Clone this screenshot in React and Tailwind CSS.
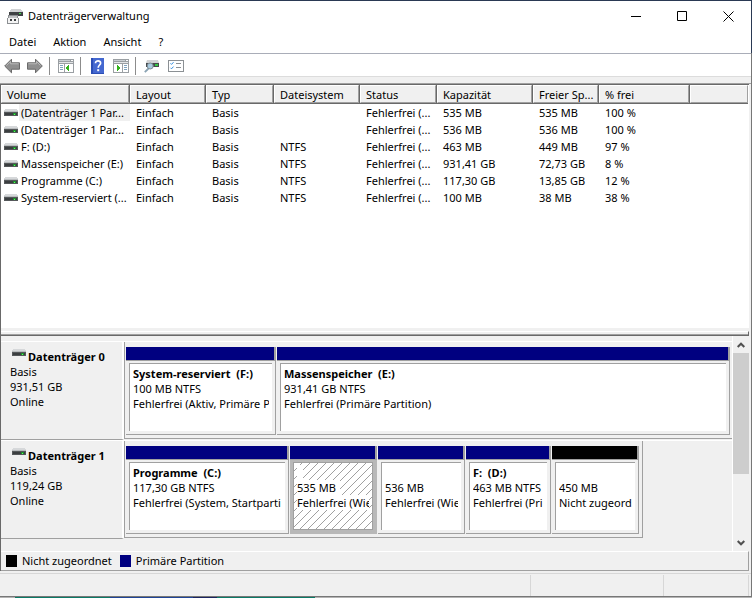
import React from 'react';

const columns = [
    { name: 'Volume', width: 'w-[129px]' },
    { name: 'Layout', width: 'w-[76px]' },
    { name: 'Typ', width: 'w-[68px]' },
    { name: 'Dateisystem', width: 'w-[86px]' },
    { name: 'Status', width: 'w-[77px]' },
    { name: 'Kapazität', width: 'w-[96px]' },
    { name: 'Freier Sp...', width: 'w-[66px]' },
    { name: '% frei', width: 'w-[91px]' },
    { name: '', width: '' },
];

const volumes = [
    ['(Datenträger 1 Par...', 'Einfach', 'Basis', '', 'Fehlerfrei (...', '535 MB', '535 MB', '100 %'],
    ['(Datenträger 1 Par...', 'Einfach', 'Basis', '', 'Fehlerfrei (...', '536 MB', '536 MB', '100 %'],
    ['F: (D:)', 'Einfach', 'Basis', 'NTFS', 'Fehlerfrei (...', '463 MB', '449 MB', '97 %'],
    ['Massenspeicher (E:)', 'Einfach', 'Basis', 'NTFS', 'Fehlerfrei (...', '931,41 GB', '72,73 GB', '8 %'],
    ['Programme (C:)', 'Einfach', 'Basis', 'NTFS', 'Fehlerfrei (...', '117,30 GB', '13,85 GB', '12 %'],
    ['System-reserviert (...', 'Einfach', 'Basis', 'NTFS', 'Fehlerfrei (...', '100 MB', '38 MB', '38 %'],
];

const disks = [
    {
        name: 'Datenträger 0',
        size: '931,51 GB',
        width: 'w-full pr-0.5',
        partitions: [
            { title: 'System-reserviert  (F:)', size: '100 MB NTFS', state: 'Fehlerfrei (Aktiv, Primäre P', grow: 'flex-[150_1_0]' },
            { title: 'Massenspeicher  (E:)', size: '931,41 GB NTFS', state: 'Fehlerfrei (Primäre Partition)', grow: 'flex-[453_1_0]' },
        ],
    },
    {
        name: 'Datenträger 1',
        size: '119,24 GB',
        width: 'w-[519px] max-w-full border-r pr-[3px]',
        partitions: [
            { title: 'Programme  (C:)', size: '117,30 GB NTFS', state: 'Fehlerfrei (System, Startparti', grow: 'flex-[163_1_0]' },
            { title: '', size: '535 MB', state: 'Fehlerfrei (Wie', grow: 'flex-[87_1_0]', selected: true },
            { title: '', size: '536 MB', state: 'Fehlerfrei (Wie', grow: 'flex-[87_1_0]' },
            { title: 'F:  (D:)', size: '463 MB NTFS', state: 'Fehlerfrei (Pri', grow: 'flex-[85_1_0]' },
            { title: '', size: '450 MB', state: 'Nicht zugeord', grow: 'flex-[87_1_0]', free: true },
        ],
    },
];

const DriveIcon = () => (
    <svg width="14" height="8" viewBox="0 0 14 8" className="shrink-0" shapeRendering="crispEdges">
        <path d="M1 0h12v1h1v2H0V1h1z" fill="#d6d8da" />
        <rect y="2" width="14" height="1" fill="#b9bcbe" />
        <rect y="3" width="14" height="4" fill="#55585a" />
        <rect x="1" y="4" width="12" height="2" fill="#3b3e40" />
        <rect x="9" y="4" width="3" height="2" fill="#1d8a2c" />
        <rect x="10" y="5" width="1" height="1" fill="#5dff5d" />
    </svg>
);

const AppIcon = () => (
    <svg width="16" height="15" viewBox="0 0 16 15" shapeRendering="crispEdges">
        <path d="M4 0h10l2 3H3z" fill="#d0d2d4" />
        <rect x="2" y="3" width="14" height="4" fill="#3f4244" />
        <rect x="12" y="4" width="2" height="1" fill="#3ce04a" />
        <path d="M1 6h10v3h1v6H0V9h1z" fill="#8c8f92" />
        <rect x="2" y="7" width="8" height="2" fill="#c2c4c6" />
        <rect x="1" y="9" width="10" height="5" fill="#f4f4f4" />
        <rect x="3" y="10" width="2" height="2" fill="#3f4244" />
        <rect x="7" y="10" width="2" height="2" fill="#3f4244" />
    </svg>
);

const ArrowIcon = ({ forward }) => (
    <svg width="16" height="16" viewBox="0 0 16 16" className={forward ? '-scale-x-100' : ''}>
        <path d="M.7 8 7.5 1.2v3.6h8v6.4h-8v3.6z" fill="#8f8f8f" stroke="#6a6a6a" />
        <path d="M2.4 7.6 6.6 3.4v2.4h8" fill="none" stroke="#b9b9b9" />
    </svg>
);

const PaneIcon = ({ right }) => (
    <svg width="16" height="14" viewBox="0 0 16 14" shapeRendering="crispEdges">
        <rect width="16" height="14" fill="#9a9fa3" />
        <rect x="1" y="1" width="11" height="1" fill="#c9ced2" />
        <rect x="13" y="1" width="2" height="1" fill="#fff" />
        <rect x="1" y="3" width="14" height="1" fill="#e3e5e7" />
        <rect x="1" y="5" width="14" height="8" fill="#fff" />
        {right ? (
            <>
                <rect x="9" y="5" width="1" height="8" fill="#9a9fa3" />
                <path d="M11 6h3v1h-3zM11 8h3v1h-3zM11 10h3v1h-3z" fill="#7fa3bf" />
                <path d="M4 6h1v1h1v1h1v2H6v1H5v1H4z" fill="#34b21c" />
            </>
        ) : (
            <>
                <rect x="6" y="5" width="1" height="8" fill="#9a9fa3" />
                <path d="M2 6h3v1H2zM2 8h3v1H2zM2 10h3v1H2z" fill="#7fa3bf" />
                <path d="M11 6h-1v1H9v1H8v2h1v1h1v1h1z" fill="#34b21c" />
            </>
        )}
    </svg>
);

const HelpIcon = () => (
    <svg width="13" height="16" viewBox="0 0 13 16">
        <rect width="13" height="16" fill="#2a4db5" />
        <rect x="2" width="11" height="15" fill="#4468d0" />
        <path d="M4.500 5.200C4.500 2 9.800 2.200 9.600 5.200 9.500 7 7.200 7.200 7.200 9.800" fill="none" stroke="#fff" strokeWidth="1.7" />
        <rect x="6.2" y="11.2" width="2" height="2" fill="#fff" />
    </svg>
);

const RescanIcon = () => (
    <svg width="16" height="13" viewBox="0 0 16 13">
        <path d="M3 0h11l1 3H2z" fill="#d0d2d4" />
        <rect x="2" y="3" width="13" height="4" fill="#45494b" />
        <rect x="11" y="4" width="3" height="2" fill="#35c845" />
        <path d="M4.500 8.500.8 12.200" stroke="#8aa3b4" strokeWidth="1.8" />
        <circle cx="6.2" cy="6" r="3" fill="#a9cbe0" stroke="#7d8b94" />
    </svg>
);

const SettingsIcon = () => (
    <svg width="16" height="12" viewBox="0 0 16 12">
        <rect x=".5" y=".5" width="15" height="11" fill="#fff" stroke="#8b9094" />
        <path d="m2.500 3.400 1 1 2-2.200M2.500 7.800l1 1 2-2.200" fill="none" stroke="#2e8be0" />
        <path d="M8 3.500h5M8 7.500h5" stroke="#8b9094" shapeRendering="crispEdges" />
    </svg>
);

const ToolSeparator = () => <div className="h-[18px] w-px bg-[#8c8c8c]" />;

const ToolButton = ({ label, children }) => (
    <button aria-label={label} className="flex h-5 w-4 items-center justify-center">{children}</button>
);

const TitleBar = () => (
    <header className="flex h-[30px] items-center pl-[7px]">
        <AppIcon />
        <h1 className="ml-[5px] flex-1">Datenträgerverwaltung</h1>
        <div className="flex h-full">
            <button aria-label="Minimieren" className="flex w-[46px] items-center justify-center">
                <svg width="11" height="11" shapeRendering="crispEdges"><path d="M0 5h10v1H0z" /></svg>
            </button>
            <button aria-label="Maximieren" className="flex w-[46px] items-center justify-center">
                <svg width="11" height="11"><path d="M.5.5h9v9h-9z" fill="none" stroke="#000" /></svg>
            </button>
            <button aria-label="Schließen" className="flex w-[46px] items-center justify-center">
                <svg width="11" height="11"><path d="m.5.5 10 10m0-10-10 10" fill="none" stroke="#000" /></svg>
            </button>
        </div>
    </header>
);

const Toolbar = () => (
    <div className="flex h-[23px] items-center border-b border-[#dcdcdc] pl-1 pt-0.5">
        <div className="flex gap-[7px]">
            <ToolButton label="Zurück"><ArrowIcon /></ToolButton>
            <ToolButton label="Vorwärts"><ArrowIcon forward /></ToolButton>
        </div>
        <div className="flex items-center gap-2 pl-1.5">
            <ToolSeparator />
            <ToolButton label="Konsolenstruktur einblenden"><PaneIcon /></ToolButton>
        </div>
        <div className="flex items-center gap-2 pl-1.5">
            <ToolSeparator />
            <ToolButton label="Hilfe"><HelpIcon /></ToolButton>
            <ToolButton label="Aktionsbereich einblenden"><PaneIcon right /></ToolButton>
        </div>
        <div className="flex items-center gap-2 pl-1.5">
            <ToolSeparator />
            <ToolButton label="Datenträger neu einlesen"><RescanIcon /></ToolButton>
            <ToolButton label="Einstellungen"><SettingsIcon /></ToolButton>
        </div>
    </div>
);

const VolumeList = () => (
    <div className="flex-1 border-l border-t border-[#696969] bg-white pr-px">
        <table className="w-full table-fixed border-separate border-spacing-0">
            <thead>
                <tr>
                    {columns.map((col) => (
                        <th key={col.name} className={`h-[19px] border-b border-r border-[#696969] bg-[#f0f0f0] p-0 text-left font-normal last:border-r-0 ${col.width}`}>
                            <div className="h-[18px] whitespace-nowrap border-b border-l border-r border-t border-b-[#a0a0a0] border-l-white border-r-[#a0a0a0] border-t-white pl-[5px] leading-[17px]">{col.name}</div>
                        </th>
                    ))}
                </tr>
            </thead>
            <tbody>
                {volumes.map((row, i) => (
                    <tr key={i} className="h-[17px]">
                        {row.map((cell, j) => (
                            <td key={j} className="whitespace-nowrap p-0 leading-[17px]">
                                {j === 0 ? (
                                    <div className="flex items-center pl-[3px]">
                                        <DriveIcon />
                                        <span className={`ml-px flex-1 pl-0.5 ${i === 0 ? 'bg-[#f0f0f0]' : ''}`}>{cell}</span>
                                    </div>
                                ) : (
                                    <span className="pl-1.5">{cell}</span>
                                )}
                            </td>
                        ))}
                        <td className="p-0" />
                    </tr>
                ))}
            </tbody>
        </table>
    </div>
);

const Hatch = () => (
    <svg className="absolute inset-0 h-full w-full" shapeRendering="crispEdges">
        <defs>
            <pattern id="hatch" width="8" height="8" patternUnits="userSpaceOnUse">
                <path d="M0 7h1v1H0zM1 6h1v1H1zM2 5h1v1H2zM3 4h1v1H3zM4 3h1v1H4zM5 2h1v1H5zM6 1h1v1H6zM7 0h1v1H7z" fill="#a0a0a0" />
            </pattern>
        </defs>
        <rect width="100%" height="100%" fill="url(#hatch)" />
    </svg>
);

const Partition = ({ title, size, state, grow, selected, free }) => (
    <div className={`flex min-w-0 flex-col ${grow}`}>
        <div className={`h-[14px] border-b border-r-2 border-[#a0a0a0] ${free ? 'bg-black' : 'bg-[#000080]'}`} />
        <div className={`flex-1 border-b border-r p-[3px] pt-0.5 ${selected ? 'border-[#b8b8b8] bg-[#b8b8b8]' : 'border-[#a0a0a0] bg-[#f0f0f0]'}`}>
            <div className={`relative h-full border-l border-t border-[#a0a0a0] bg-white px-[3px] pt-0.5 ${selected ? 'border-b border-r' : ''}`}>
                {selected && <Hatch />}
                <div className="relative overflow-hidden whitespace-pre leading-[15px]">
                    <p className="font-bold"><span className={selected ? 'bg-white' : ''}>{title || '  '}</span></p>
                    <p><span className={selected ? 'bg-white pr-1' : ''}>{size}</span></p>
                    <p><span className={selected ? 'bg-white' : ''}>{state}</span></p>
                </div>
            </div>
        </div>
    </div>
);

const DiskRow = ({ name, size, width, partitions }) => (
    <section className="flex h-[99px]">
        <div className="w-[123px] shrink-0 border-b border-r-2 border-t border-b-[#a0a0a0] border-r-white border-t-white pl-[9px] pt-[7px] leading-[15px]">
            <h2 className="flex items-start pl-0.5 font-bold">
                <DriveIcon />
                <span className="ml-0.5">{name}</span>
            </h2>
            <p>Basis</p>
            <p>{size}</p>
            <p>Online</p>
        </div>
        <div className="flex min-w-0 flex-1 border-t border-white pb-px">
            <div className={`flex gap-px border-b border-l border-[#a0a0a0] pb-[3px] pl-px pt-[5px] ${width}`}>
                {partitions.map((p, i) => <Partition key={i} {...p} />)}
            </div>
        </div>
    </section>
);

const ScrollBar = () => (
    <div className="flex w-[17px] flex-col border-l border-white bg-[#f0f0f0]">
        <button aria-label="Nach oben" className="flex h-[17px] items-center justify-center">
            <svg width="8" height="6"><path d="m.7 5 3.300-3.300L7.300 5" fill="none" stroke="#505050" strokeWidth="2" /></svg>
        </button>
        <div className="h-[121px] bg-[#cdcdcd]" />
        <div className="flex-1" />
        <button aria-label="Nach unten" className="flex h-[17px] items-center justify-center">
            <svg width="8" height="6"><path d="m.7 1 3.300 3.300L7.300 1" fill="none" stroke="#505050" strokeWidth="2" /></svg>
        </button>
    </div>
);

const Legend = () => (
    <div className="flex h-5 items-center border-b border-r border-t border-b-[#a0a0a0] border-r-[#a0a0a0] border-t-white pl-[5px]">
        <span className="h-3 w-[11px] bg-black" />
        <span className="ml-[5px]">Nicht zugeordnet</span>
        <span className="ml-2 h-3 w-[11px] bg-[#000080]" />
        <span className="ml-[5px]">Primäre Partition</span>
    </div>
);

const App = () => (
    <div className="flex min-h-screen flex-col bg-[#f0f0f0] font-['Noto_Sans',sans-serif] text-[11px] text-black">
        <div className="border-r border-t border-[#2a3954] bg-white">
            <TitleBar />
            <nav className="flex h-[22px] items-center gap-[17px] pl-[9px]">
                <button>Datei</button>
                <button>Aktion</button>
                <button>Ansicht</button>
                <button>?</button>
            </nav>
        </div>
        <div className="flex flex-1 flex-col border-r border-[#777777]">
            <div className="border-t border-[#a9adb8] bg-white">
                <Toolbar />
            </div>
            <main className="mt-1.5 flex flex-1 flex-col border-t border-[#a0a0a0] pr-0.5">
                <VolumeList />
                <div className="border-l border-[#696969] pt-[3px]">
                    <div className="h-[5px] border-b border-r border-t border-b-[#696969] border-r-[#696969] border-t-white">
                        <div className="h-[3px] border-b border-[#a0a0a0]" />
                    </div>
                </div>
                <div className="flex border-l border-[#696969]">
                    <div className="min-w-0 flex-1 pb-3 pt-[5px]">
                        {disks.map((disk) => <DiskRow key={disk.name} {...disk} />)}
                    </div>
                    <ScrollBar />
                </div>
                <div className="border-l border-[#696969]">
                    <Legend />
                </div>
            </main>
            <footer className="mt-0.5 flex h-6 border-b border-t border-b-[#777777] border-t-[#d7d7d7] pr-0.5 pt-px">
                <div className="flex-1 border-r border-[#d7d7d7]" />
                <div className="w-[133px] border-r border-[#d7d7d7]" />
                <div className="w-[85px] border-r border-[#d7d7d7]" />
            </footer>
        </div>
        <div className="flex h-px bg-[#b4b4b4]">
            <div className="ml-[15px] w-[95px] bg-[#0b7a66]" />
            <div className="w-[83px] bg-[#1f4496]" />
            <div className="w-6 bg-[#1b2560]" />
            <div className="w-[98px] bg-[#0b7a66]" />
        </div>
    </div>
);

export default App;
